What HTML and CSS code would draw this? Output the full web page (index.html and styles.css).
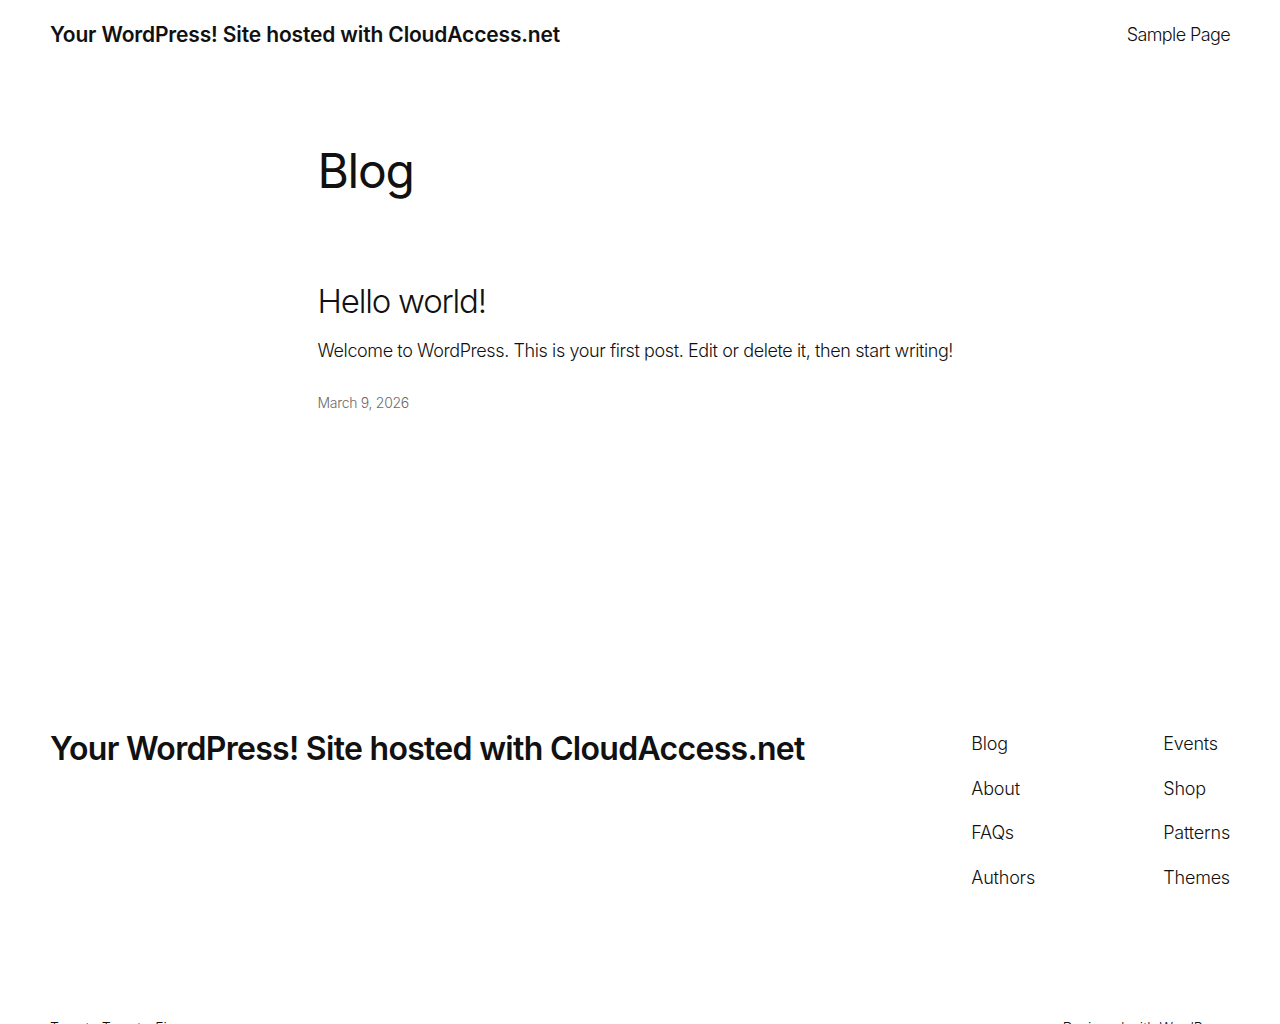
FILE: index.html
```html
<!DOCTYPE html>
<html lang="en">
<head>
    <meta charset="UTF-8">
    <meta name="viewport" content="width=device-width, initial-scale=1.0">
    <title>Blog – Your WordPress! Site hosted with CloudAccess.net</title>
    <link rel="stylesheet" href="styles.css">
</head>
<body>

    <header class="site-header">
        <a class="site-title" href="#">Your WordPress! Site hosted with CloudAccess.net</a>
        <nav class="header-nav">
            <a href="#">Sample Page</a>
        </nav>
    </header>

    <main class="site-main">
        <h1 class="page-title">Blog</h1>

        <article class="post">
            <h2 class="post-title"><a href="#">Hello world!</a></h2>
            <p class="post-excerpt">Welcome to WordPress. This is your first post. Edit or delete it, then start writing!</p>
            <time class="post-date" datetime="2026-03-09">March 9, 2026</time>
        </article>
    </main>

    <footer class="site-footer">
        <div class="footer-top">
            <a class="footer-title" href="#">Your WordPress! Site hosted with CloudAccess.net</a>
            <div class="footer-menus">
                <nav class="footer-nav">
                    <a href="#">Blog</a>
                    <a href="#">About</a>
                    <a href="#">FAQs</a>
                    <a href="#">Authors</a>
                </nav>
                <nav class="footer-nav">
                    <a href="#">Events</a>
                    <a href="#">Shop</a>
                    <a href="#">Patterns</a>
                    <a href="#">Themes</a>
                </nav>
            </div>
        </div>
        <div class="footer-bottom">
            <p>Twenty Twenty-Five</p>
            <p>Designed with <a href="#">WordPress</a></p>
        </div>
    </footer>

</body>
</html>
```

FILE: styles.css
```css
body {
    margin: 0;
    background-color: #ffffff;
    color: #111111;
    font-family: Inter, "Liberation Sans", sans-serif;
    font-weight: 300;
}
a {
    color: inherit;
    text-decoration: none;
}
.site-header {
    display: flex;
    justify-content: space-between;
    align-items: center;
    padding: 20px 50px;
}
.site-title {
    font-size: 21px;
    font-weight: 600;
    letter-spacing: -0.15px;
    line-height: 30px;
}
.header-nav a {
    font-size: 18px;
    letter-spacing: -0.6px;
    line-height: 30px;
}
.site-main {
    width: 645px;
    margin: 0 auto;
    padding-top: 72px;
    min-height: 588px;
}
.page-title {
    margin: 0;
    font-size: 48px;
    font-weight: 400;
    letter-spacing: -1.3px;
    line-height: 1.2;
}
.post {
    margin-top: 82px;
}
.post-title {
    margin: 0;
    font-size: 33px;
    font-weight: 300;
    letter-spacing: -1.2px;
    line-height: 1.2;
}
.post-excerpt {
    margin: 17px 0 0;
    font-size: 18px;
    letter-spacing: -0.4px;
    line-height: 1.4;
}
.post-date {
    display: block;
    margin-top: 31px;
    font-size: 14px;
    letter-spacing: -0.3px;
    color: #6b6b6b;
}
.site-footer {
    padding: 0 50px;
}
.footer-top {
    display: flex;
    justify-content: space-between;
    align-items: flex-start;
}
.footer-title {
    font-size: 32px;
    font-weight: 600;
    letter-spacing: -0.7px;
    line-height: 1.2;
}
.footer-menus {
    display: grid;
    grid-template-columns: 192px auto;
}
.footer-nav {
    display: flex;
    flex-direction: column;
    gap: 17.5px;
}
.footer-nav a {
    font-size: 18px;
    letter-spacing: -0.2px;
    line-height: 27px;
}
.footer-bottom {
    display: flex;
    justify-content: space-between;
    margin-top: 128px;
    padding-bottom: 50px;
    font-size: 14px;
}
.footer-bottom p {
    margin: 0;
}
```
